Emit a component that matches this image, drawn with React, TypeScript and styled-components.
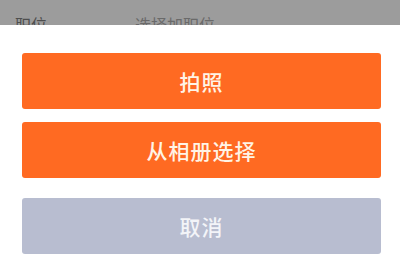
import React from "react";
import styled, { createGlobalStyle } from "styled-components";

const Global = createGlobalStyle`
  html, body { margin: 0; padding: 0; background: #fff; }
  body { font-family: "Noto Sans CJK SC", "Noto Sans", sans-serif; width: 400px; height: 255px; overflow: hidden; }
`;

const Page = styled.div`
  width: 400px;
  height: 255px;
  display: flex;
  flex-direction: column;
  overflow: hidden;
`;

const Backdrop = styled.div`
  height: 25px;
  background: #9c9c9c;
  overflow: hidden;
  flex-shrink: 0;
`;

const Row = styled.div`
  display: flex;
  align-items: flex-start;
  padding: 13px 20px 0 15px;
  font-size: 16px;
  line-height: 22px;
  color: #4e4e4e;
`;

const Label = styled.span`
  width: 120px;
`;

const Value = styled.span`
  flex: 1;
  color: #6a6a6a;
`;

const Arrow = styled.span`
  font-size: 12px;
  color: #444;
  padding-top: 4px;
`;

const Sheet = styled.div`
  flex: 1;
  background: #fff;
  display: flex;
  flex-direction: column;
  padding: 28px 19px 0 22px;
`;

const Button = styled.div<{ $variant: "primary" | "cancel"; $gap: number }>`
  height: 56px;
  margin-top: ${(p) => p.$gap}px;
  border-radius: 3px;
  background: ${(p) => (p.$variant === "primary" ? "#ff6a22" : "#b8bdd0")};
  color: ${(p) => (p.$variant === "primary" ? "#fff4e6" : "#f3f4f8")};
  display: flex;
  align-items: center;
  justify-content: center;
  font-size: 21px;
  font-weight: 500;
  letter-spacing: 1px;
  flex-shrink: 0;
`;

export default function App() {
  return (
    <Page>
      <Global />
      <Backdrop>
        <Row>
          <Label>职位</Label>
          <Value>选择加职位</Value>
          <Arrow>▸</Arrow>
        </Row>
      </Backdrop>
      <Sheet>
        <Button $variant="primary" $gap={0}>拍照</Button>
        <Button $variant="primary" $gap={13}>从相册选择</Button>
        <Button $variant="cancel" $gap={20}>取消</Button>
      </Sheet>
    </Page>
  );
}
